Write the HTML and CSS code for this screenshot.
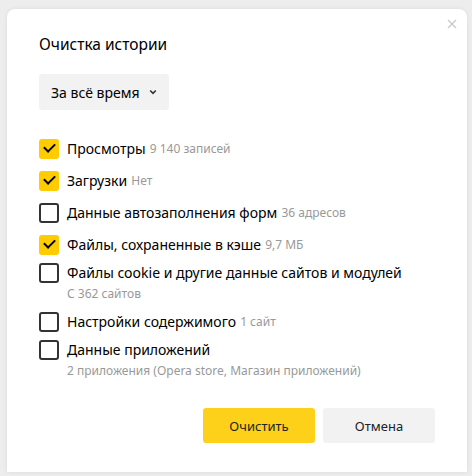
FILE: index.html
```html
<!DOCTYPE html>
<html lang="ru">
<head>
<meta charset="utf-8">
<link rel="stylesheet" href="styles.css">
</head>
<body>
<div class="dialog">
  <button class="close" aria-label="Закрыть">
    <svg width="10" height="10" viewBox="0 0 10 10"><path d="M1 1L9 9M9 1L1 9" stroke="#c8c8c8" stroke-width="1.2" fill="none"/></svg>
  </button>
  <h1 class="title">Очистка истории</h1>
  <button class="select">За всё время
    <svg class="chev" width="8" height="6" viewBox="0 0 8 6"><path d="M1.2 1.5L4 4.3L6.8 1.5" stroke="#333" stroke-width="1.6" fill="none"/></svg>
  </button>
  <ul class="list">
    <li class="item checked"><span class="box"></span><div class="label"><span class="name">Просмотры</span> <span class="meta">9 140 записей</span></div></li>
    <li class="item checked"><span class="box"></span><div class="label"><span class="name">Загрузки</span> <span class="meta">Нет</span></div></li>
    <li class="item"><span class="box"></span><div class="label"><span class="name">Данные автозаполнения форм</span> <span class="meta">36 адресов</span></div></li>
    <li class="item checked"><span class="box"></span><div class="label"><span class="name">Файлы, сохраненные в кэше</span> <span class="meta">9,7 МБ</span></div></li>
    <li class="item close-gap"><span class="box"></span><div class="label"><span class="name">Файлы cookie и другие данные сайтов и модулей</span><div class="sub">С 362 сайтов</div></div></li>
    <li class="item close-gap"><span class="box"></span><div class="label"><span class="name">Настройки содержимого</span> <span class="meta">1 сайт</span></div></li>
    <li class="item close-gap"><span class="box"></span><div class="label"><span class="name">Данные приложений</span><div class="sub">2 приложения (Opera store, Магазин приложений)</div></div></li>
  </ul>
  <div class="actions">
    <button class="btn primary">Очистить</button>
    <button class="btn">Отмена</button>
  </div>
</div>
</body>
</html>
```
FILE: styles.css
```css
html, body {
  margin: 0;
  padding: 0;
}
body {
  background: #ededed;
  width: 472px;
  height: 476px;
  overflow: hidden;
  font-family: "Noto Sans", "Open Sans", sans-serif;
  color: #000;
}
.dialog {
  position: relative;
  margin: 9px 0 0 7px;
  width: 460px;
  height: 463px;
  box-sizing: border-box;
  background: #fff;
  border-radius: 8px 8px 0 0;
  box-shadow: 0 0 4px rgba(0,0,0,0.08);
  padding: 25px 32px 0 32px;
  display: flex;
  flex-direction: column;
  align-items: flex-start;
}
.close {
  position: absolute;
  top: 10px;
  right: 10px;
  width: 10px;
  height: 10px;
  padding: 0;
  border: 0;
  background: none;
  display: block;
}
.close svg { display: block; }
.title {
  margin: 0;
  font-size: 15.5px;
  font-weight: 400;
  line-height: 20px;
}
.select {
  margin-top: 20px;
  height: 36px;
  padding: 0 12px;
  border: 0;
  border-radius: 3px;
  background: #f2f2f2;
  font-family: inherit;
  font-size: 14px;
  color: #000;
  display: flex;
  align-items: center;
  gap: 10px;
}
.list {
  list-style: none;
  margin: 29px 0 0 0;
  padding: 0;
  display: flex;
  flex-direction: column;
  gap: 12px;
}
.item {
  display: flex;
  align-items: flex-start;
  gap: 8px;
  line-height: 20px;
}
.item.close-gap { margin-top: -4px; }
.label {
  line-height: 20px;
  height: auto;
}
.box {
  flex: none;
  width: 20px;
  height: 20px;
  box-sizing: border-box;
  border: 2px solid #333;
  border-radius: 3px;
  position: relative;
}
.checked .box {
  border: 0;
  background: #fc0;
}
.checked .box::after {
  content: "";
  position: absolute;
  left: 5px;
  top: 4px;
  width: 9px;
  height: 5px;
  border-left: 2px solid #000;
  border-bottom: 2px solid #000;
  transform: rotate(-45deg);
  transform-origin: center;
}
.name {
  font-size: 14px;
  line-height: 20px;
  vertical-align: top;
}
.meta, .sub {
  font-size: 12px;
  color: #999;
  line-height: 20px;
  vertical-align: top;
}
.sub {
  margin-top: 1px;
}
.actions {
  margin-top: auto;
  margin-bottom: 29px;
  align-self: flex-end;
  display: flex;
  gap: 8px;
}
.btn {
  width: 112px;
  height: 35px;
  border: 0;
  border-radius: 3px;
  background: #f2f2f2;
  font-family: inherit;
  font-size: 13px;
  color: #222;
}
.btn.primary {
  background: #fdd11a;
}
```
